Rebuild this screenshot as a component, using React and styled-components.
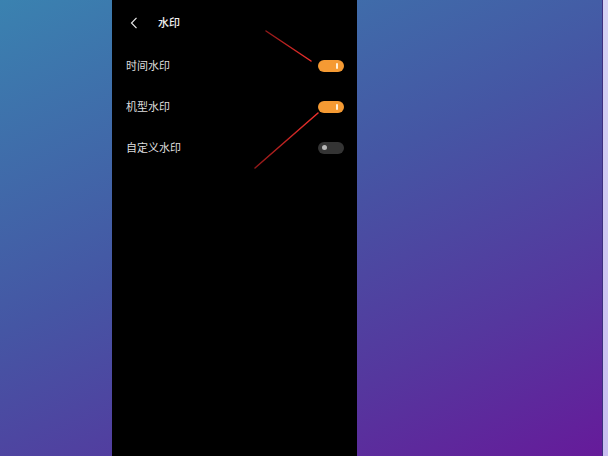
import React from "react";
import styled, { createGlobalStyle } from "styled-components";

const Global = createGlobalStyle`
  html, body { margin: 0; padding: 0; }
  body { font-family: "Noto Sans CJK SC", "Noto Sans", sans-serif; }
`;

const Page = styled.div`
  position: relative;
  width: 608px;
  height: 456px;
  overflow: hidden;
  display: flex;
  background: linear-gradient(155deg, #3a82b0 0%, #4556a4 45%, #55379e 75%, #661a9a 100%);
`;

const Edge = styled.div`
  position: absolute;
  top: 0;
  right: 0;
  width: 5px;
  height: 100%;
  border-left: 1px solid #3c2f80;
  background: linear-gradient(180deg, #d7d3f4, #c9bff0);
`;

const Phone = styled.div`
  margin-left: 112px;
  width: 245px;
  height: 100%;
  background: #000;
  display: flex;
  flex-direction: column;
`;

const Header = styled.div`
  height: 45px;
  display: flex;
  align-items: center;
  padding-left: 18px;
  gap: 20px;
`;

const Title = styled.span`
  color: #f2f2f2;
  font-size: 11px;
  font-weight: 500;
  line-height: 1;
`;

const Row = styled.div`
  height: 41px;
  display: flex;
  align-items: center;
  justify-content: space-between;
  padding: 0 13px 0 14px;
`;

const Label = styled.span`
  color: #dedede;
  font-size: 11px;
  line-height: 1;
`;

const Toggle = styled.div`
  position: relative;
  width: 26px;
  height: 12px;
  border-radius: 6px;
  background: ${(p) => (p.$on ? "#f59a33" : "#343434")};
`;

const OnMark = styled.div`
  position: absolute;
  right: 6px;
  top: 3px;
  width: 2px;
  height: 6px;
  border-radius: 1px;
  background: #fff0d8;
`;

const OffDot = styled.div`
  position: absolute;
  left: 4px;
  top: 3.5px;
  width: 5px;
  height: 5px;
  border-radius: 50%;
  background: #b8b8b8;
`;

const Arrows = styled.svg`
  position: absolute;
  left: 0;
  top: 0;
  pointer-events: none;
`;

const rows = [
  { label: "时间水印", on: true },
  { label: "机型水印", on: true },
  { label: "自定义水印", on: false },
];

export default function App() {
  return (
    <>
      <Global />
      <Page>
        <Phone>
          <Header>
            <svg width="8" height="12" viewBox="0 0 8 12">
              <path d="M6.5 0.8 L1.5 6 L6.5 11.2" fill="none" stroke="#e8e8e8" strokeWidth="1.2" />
            </svg>
            <Title>水印</Title>
          </Header>
          {rows.map((r) => (
            <Row key={r.label}>
              <Label>{r.label}</Label>
              <Toggle $on={r.on}>{r.on ? <OnMark /> : <OffDot />}</Toggle>
            </Row>
          ))}
        </Phone>
        <Edge />
        <Arrows width="608" height="456" viewBox="0 0 608 456">
          <defs>
            <linearGradient id="a1" x1="266" y1="31" x2="311" y2="61" gradientUnits="userSpaceOnUse">
              <stop offset="0" stopColor="#901818" />
              <stop offset="1" stopColor="#f2302c" />
            </linearGradient>
            <linearGradient id="a2" x1="255" y1="168" x2="318" y2="113" gradientUnits="userSpaceOnUse">
              <stop offset="0" stopColor="#901818" />
              <stop offset="1" stopColor="#f2302c" />
            </linearGradient>
          </defs>
          <line x1="266" y1="31" x2="311" y2="61" stroke="url(#a1)" strokeWidth="1.5" strokeLinecap="round" />
          <line x1="255" y1="168" x2="318" y2="113" stroke="url(#a2)" strokeWidth="1.5" strokeLinecap="round" />
        </Arrows>
      </Page>
    </>
  );
}
